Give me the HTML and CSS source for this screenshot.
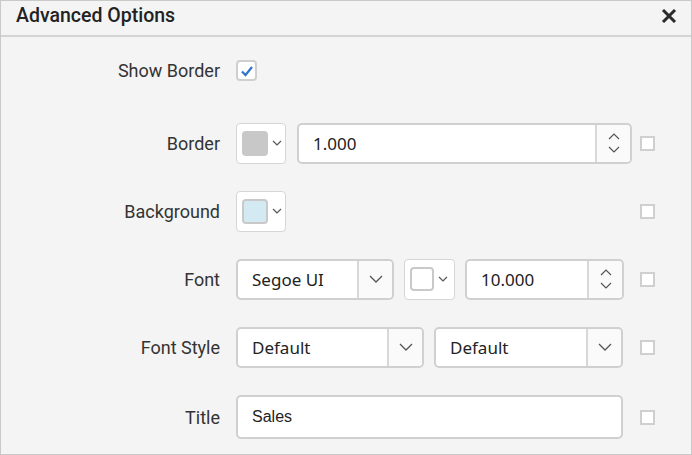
FILE: index.html
```html
<!DOCTYPE html>
<html>
<head>
<meta charset="utf-8">
<link rel="stylesheet" href="styles.css">
</head>
<body>
<div class="dialog">
  <div class="header">
    <span class="title">Advanced Options</span>
    <svg class="close" width="16" height="14" viewBox="0 0 16 14"><path d="M2 1 L14 13 M14 1 L2 13" stroke="#2b2b2b" stroke-width="3" fill="none"/></svg>
  </div>
  <div class="body">
    <div class="row first">
      <div class="label">Show Border</div>
      <div class="controls">
        <span class="check on"><svg width="14" height="12" viewBox="0 0 14 12"><path d="M2 6.5 L5.5 10 L12 2" stroke="#2f76c9" stroke-width="2.2" fill="none"/></svg></span>
      </div>
    </div>

    <div class="row">
      <div class="label">Border</div>
      <div class="controls wide">
        <div class="picker"><span class="swatch grey"></span><svg class="mini" width="10" height="6" viewBox="0 0 10 6"><path d="M1 1 L5 5 L9 1" stroke="#555" stroke-width="1.2" fill="none"/></svg></div>
        <div class="num w335"><span class="val">1.000</span><span class="spin"><svg width="14" height="24" viewBox="0 0 14 24"><path d="M2 8 L7 3 L12 8 M2 16 L7 21 L12 16" stroke="#555" stroke-width="1.2" fill="none"/></svg></span></div>
      </div>
      <span class="check small"></span>
    </div>

    <div class="row">
      <div class="label">Background</div>
      <div class="controls">
        <div class="picker"><span class="swatch blue"></span><svg class="mini" width="10" height="6" viewBox="0 0 10 6"><path d="M1 1 L5 5 L9 1" stroke="#555" stroke-width="1.2" fill="none"/></svg></div>
      </div>
      <span class="check small"></span>
    </div>

    <div class="row">
      <div class="label">Font</div>
      <div class="controls">
        <div class="drop w158"><span class="val">Segoe UI</span><span class="btn"><svg width="14" height="8" viewBox="0 0 14 8"><path d="M1 1 L7 7 L13 1" stroke="#555" stroke-width="1.3" fill="none"/></svg></span></div>
        <div class="picker p51"><span class="swatch white"></span><svg class="mini" width="10" height="6" viewBox="0 0 10 6"><path d="M1 1 L5 5 L9 1" stroke="#555" stroke-width="1.2" fill="none"/></svg></div>
        <div class="num w159"><span class="val">10.000</span><span class="spin"><svg width="14" height="24" viewBox="0 0 14 24"><path d="M2 8 L7 3 L12 8 M2 16 L7 21 L12 16" stroke="#555" stroke-width="1.2" fill="none"/></svg></span></div>
      </div>
      <span class="check small"></span>
    </div>

    <div class="row">
      <div class="label">Font Style</div>
      <div class="controls">
        <div class="drop w188"><span class="val">Default</span><span class="btn"><svg width="14" height="8" viewBox="0 0 14 8"><path d="M1 1 L7 7 L13 1" stroke="#555" stroke-width="1.3" fill="none"/></svg></span></div>
        <div class="drop w189"><span class="val">Default</span><span class="btn"><svg width="14" height="8" viewBox="0 0 14 8"><path d="M1 1 L7 7 L13 1" stroke="#555" stroke-width="1.3" fill="none"/></svg></span></div>
      </div>
      <span class="check small"></span>
    </div>

    <div class="row last">
      <div class="label">Title</div>
      <div class="controls">
        <div class="text w387"><span class="val sales">Sales</span></div>
      </div>
      <span class="check small"></span>
    </div>
  </div>
</div>
</body>
</html>
```

FILE: styles.css
```css
html, body {
  margin: 0;
  padding: 0;
  background: #ffffff;
}
.dialog {
  box-sizing: border-box;
  width: 692px;
  height: 455px;
  border: 1px solid #c9c9c9;
  background: #f4f4f4;
  font-family: Roboto, "Liberation Sans", sans-serif;
  color: #333;
  display: flex;
  flex-direction: column;
}
.header {
  height: 34px;
  border-bottom: 2px solid #d4d4d4;
  display: flex;
  align-items: center;
  justify-content: space-between;
  padding: 0 14px 0 15px;
  flex: none;
}
.title {
  font-size: 19.5px;
  font-weight: 500;
  color: #222;
  margin-top: -5px;
}
.close {
  margin-top: -4px;
}
.body {
  display: flex;
  flex-direction: column;
}
.row {
  display: flex;
  align-items: center;
  height: 68px;
}
.row.first {
  height: 67px;
  margin-bottom: 5px;
}
.row.last {
  margin-top: 2px;
}
.label {
  width: 219px;
  text-align: right;
  font-size: 18px;
  color: #333;
  flex: none;
}
.controls {
  margin-left: 16px;
  width: 396px;
  display: flex;
  align-items: center;
  gap: 10px;
  flex: none;
}
.controls.wide {
  gap: 11px;
}
.check {
  box-sizing: border-box;
  display: inline-flex;
  align-items: center;
  justify-content: center;
  background: #fff;
  border: 2px solid #cfcfcf;
  flex: none;
}
.check.on {
  width: 21px;
  height: 21px;
  border-radius: 4px;
}
.check.small {
  width: 15px;
  height: 15px;
  margin-left: 8px;
}
.picker {
  box-sizing: border-box;
  width: 50px;
  height: 41px;
  border: 1px solid #d6d6d6;
  border-radius: 4px;
  background: #fff;
  display: flex;
  align-items: center;
  padding-left: 5px;
  gap: 4px;
  flex: none;
}
.picker.p51 {
  width: 51px;
}
.swatch {
  box-sizing: border-box;
  width: 26px;
  height: 25px;
  border-radius: 4px;
  display: block;
}
.swatch.grey {
  background: #c8c8c8;
}
.swatch.blue {
  background: #d3eaf2;
  border: 2px solid #c9c9c9;
}
.swatch.white {
  background: #fff;
  border: 2px solid #c9c9c9;
  width: 24px;
  height: 24px;
}
.mini {
  display: block;
}
.num, .drop, .text {
  box-sizing: border-box;
  height: 41px;
  border: 2px solid #d0d0d0;
  border-radius: 5px;
  background: #fff;
  display: flex;
  align-items: center;
  font-family: "Noto Sans", "Open Sans", sans-serif;
  font-size: 17px;
  color: #222;
  flex: none;
}
.val {
  flex: 1;
  padding-left: 14px;
}
.spin, .btn {
  width: 33px;
  align-self: stretch;
  border-left: 2px solid #d8d8d8;
  background: #fafafa;
  display: flex;
  align-items: center;
  justify-content: center;
  border-radius: 0 4px 4px 0;
  flex: none;
}
.w335 { width: 335px; }
.w158 { width: 158px; }
.w159 { width: 159px; }
.w188 { width: 188px; }
.w189 { width: 189px; }
.w387 { width: 387px; height: 44px; }
.sales {
  font-family: "Liberation Sans", Arial, sans-serif;
  font-size: 16px;
  color: #222;
}
```
